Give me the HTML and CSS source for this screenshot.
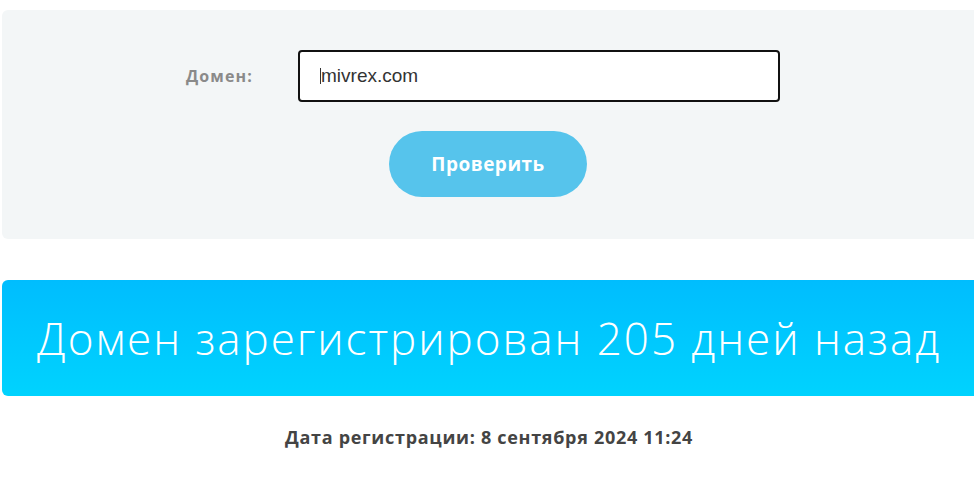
FILE: index.html
```html
<!DOCTYPE html>
<html lang="ru">
<head>
    <meta charset="UTF-8">
    <meta name="viewport" content="width=device-width, initial-scale=1.0">
    <title>Проверка домена</title>
    <link rel="stylesheet" href="styles.css">
</head>
<body>
    <div class="page">
        <form class="check-form">
            <div class="form-row">
                <label for="domain" class="form-label">Домен:</label>
                <div class="form-input">mivrex.com</div>
            </div>
            <button type="button" class="check-btn">Проверить</button>
        </form>

        <div class="result">
            <h2>Домен зарегистрирован 205 дней назад</h2>
        </div>

        <p class="reg-date">Дата регистрации: 8 сентября 2024 11:24</p>
    </div>
</body>
</html>
```

FILE: styles.css
```css
body {
    font-family: 'Open Sans', sans-serif;
    margin: 0;
    padding: 0;
    background-color: #fff;
    color: #333;
    overflow: hidden;
}

.page {
    padding: 10px 0 0 2px;
    margin-right: -10px;
}

.check-form {
    background-color: #f3f6f7;
    border-radius: 6px;
    height: 229px;
    box-sizing: border-box;
    padding-top: 40px;
    display: flex;
    flex-direction: column;
    align-items: flex-start;
}

.form-row {
    display: flex;
    align-items: center;
    margin-left: 184px;
}

.form-label {
    font-weight: 700;
    font-size: 16px;
    letter-spacing: 1.1px;
    color: #8a8a8a;
    width: 112px;
}

.form-input {
    width: 482px;
    height: 52px;
    box-sizing: border-box;
    border: 2px solid #111;
    border-radius: 4px;
    background: #fff;
    font-family: 'Liberation Sans', Arial, sans-serif;
    font-size: 19px;
    color: #333;
    padding-left: 20px;
    display: flex;
    align-items: center;
}

.form-input::before {
    content: '';
    width: 1px;
    height: 16px;
    background: #333;
}

.check-btn {
    margin: 29px 0 0 387px;
    width: 198px;
    height: 66px;
    border: none;
    border-radius: 33px;
    background-color: #56c4ec;
    color: #fff;
    font-family: 'Open Sans', sans-serif;
    font-weight: 700;
    font-size: 19px;
    letter-spacing: 0.5px;
    cursor: pointer;
}

.result {
    margin-top: 41px;
    height: 116px;
    border-radius: 6px;
    background: linear-gradient(#00bdfe, #00d3fe);
    display: flex;
    align-items: center;
    padding-left: 35px;
}

.result h2 {
    margin: 0;
    color: #fff;
    font-weight: 300;
    font-size: 44px;
    letter-spacing: 1.95px;
}

.reg-date {
    margin: 29px 0 0 283px;
    font-weight: 700;
    font-size: 18px;
    letter-spacing: 0.7px;
    color: #444;
}
```
